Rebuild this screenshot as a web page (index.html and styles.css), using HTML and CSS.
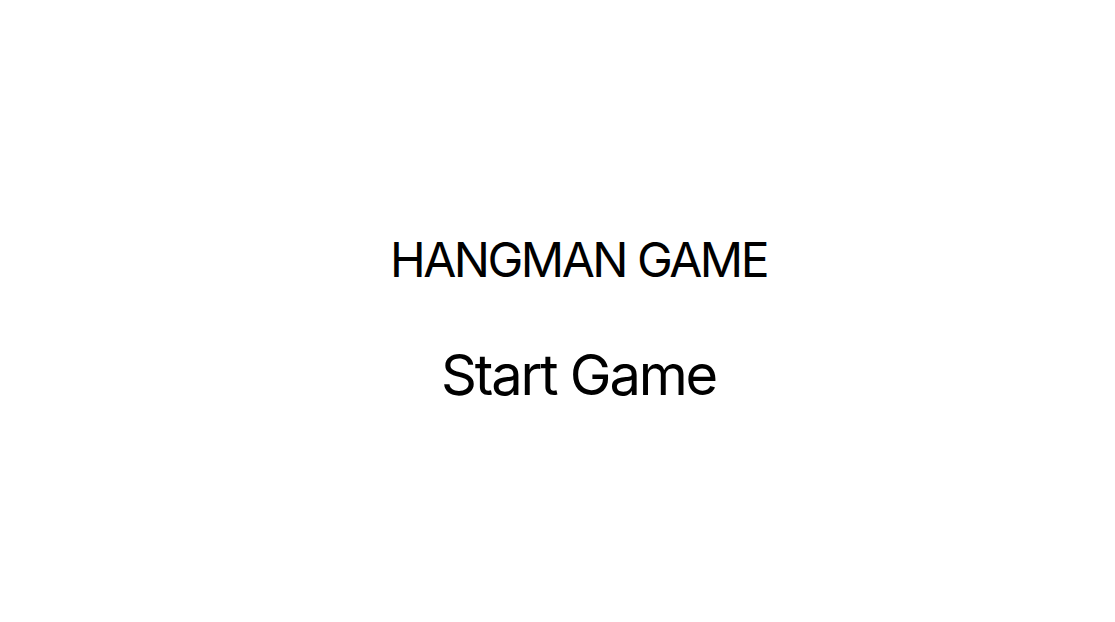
FILE: index.html
```html
<!DOCTYPE html>
<html>
<head>
<meta charset="utf-8">
<link rel="stylesheet" href="styles.css">
</head>
<body>
<main class="screen">
  <h1 class="title">HANGMAN GAME</h1>
  <button class="start">Start Game</button>
</main>
</body>
</html>
```

FILE: styles.css
```css
html, body {
  margin: 0;
  padding: 0;
  background: #fff;
}
.screen {
  height: 622px;
  box-sizing: border-box;
  display: flex;
  flex-direction: column;
  align-items: center;
  justify-content: flex-start;
  padding-top: 228px;
  padding-left: 42px;
  font-family: Inter, "Liberation Sans", sans-serif;
  color: #000;
}
.title {
  margin: 0;
  font-size: 48px;
  font-weight: 400;
  line-height: 64px;
  letter-spacing: -2.5px;
}
.start {
  margin-top: 48px;
  padding: 0;
  border: none;
  background: none;
  font-family: inherit;
  font-size: 56px;
  font-weight: 400;
  line-height: 70px;
  color: #000;
  letter-spacing: -2.2px;
}
```
